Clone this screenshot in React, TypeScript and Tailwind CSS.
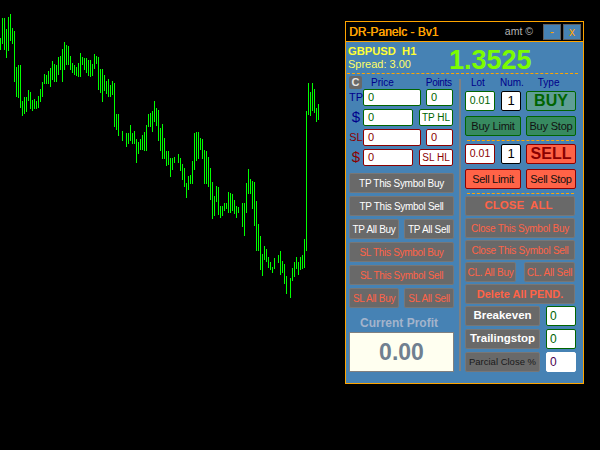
import React from 'react';

// [x, top, bottom] of each bar on the chart
const bars: number[][] = [
  [0, 38, 50], [2, 18, 44], [4, 18, 50], [6, 29, 58], [8, 17, 51], [10, 14, 41], [12, 28, 44], [14, 31, 82],
  [16, 67, 97], [18, 65, 98], [20, 65, 108], [22, 101, 116], [24, 97, 114], [26, 97, 112], [28, 90, 101], [30, 92, 109],
  [32, 100, 111], [34, 99, 109], [36, 101, 109], [38, 96, 108], [40, 89, 102], [42, 82, 97], [44, 74, 84], [46, 75, 84],
  [48, 71, 84], [50, 68, 87], [52, 61, 80], [54, 64, 82], [56, 65, 82], [58, 57, 75], [60, 56, 70], [62, 49, 82],
  [64, 42, 70], [66, 45, 65], [68, 46, 65], [70, 56, 70], [72, 63, 73], [74, 65, 75], [76, 67, 76], [78, 63, 77],
  [80, 53, 77], [82, 57, 65], [84, 58, 70], [86, 58, 73], [88, 60, 76], [90, 60, 77], [92, 64, 76], [94, 54, 69],
  [96, 56, 64], [98, 57, 90], [100, 69, 93], [102, 69, 102], [104, 75, 91], [106, 81, 94], [108, 79, 97], [110, 85, 97],
  [112, 81, 95], [114, 83, 127], [116, 114, 130], [118, 114, 136], [122, 131, 141], [126, 133, 147], [128, 133, 144],
  [130, 125, 141], [132, 133, 144], [134, 131, 144], [136, 139, 163], [138, 142, 154], [140, 139, 150], [142, 135, 150],
  [144, 132, 151], [146, 125, 151], [148, 114, 127], [150, 113, 127], [152, 111, 132], [154, 101, 122], [156, 108, 126],
  [158, 110, 141], [160, 128, 151], [162, 124, 159], [164, 138, 159], [166, 151, 166], [168, 151, 165], [170, 158, 177],
  [172, 158, 170], [174, 157, 163], [178, 154, 163], [180, 158, 171], [182, 164, 180], [184, 168, 187], [186, 183, 198],
  [188, 176, 190], [190, 175, 184], [192, 161, 184], [194, 133, 170], [196, 132, 161], [198, 132, 159], [200, 138, 150],
  [202, 139, 159], [204, 150, 184], [206, 151, 184], [208, 157, 187], [210, 168, 200], [212, 182, 219], [214, 196, 216],
  [216, 186, 202], [218, 187, 215], [220, 206, 218], [222, 206, 216], [224, 203, 211], [226, 203, 209], [228, 192, 213],
  [230, 193, 213], [232, 194, 211], [234, 200, 214], [236, 206, 218], [238, 207, 213], [242, 203, 227], [244, 203, 236],
  [246, 183, 213], [248, 169, 194], [250, 179, 194], [252, 181, 209], [254, 182, 226], [256, 201, 251], [258, 224, 251],
  [260, 236, 270], [262, 254, 276], [264, 246, 260], [266, 249, 262], [268, 257, 268], [270, 262, 270], [272, 267, 273],
  [274, 258, 269], [278, 255, 263], [280, 251, 275], [282, 261, 273], [284, 264, 284], [286, 276, 294], [290, 278, 298],
  [292, 268, 281], [294, 262, 277], [296, 257, 269], [298, 262, 275], [300, 257, 270], [302, 255, 269], [304, 239, 268],
  [306, 111, 251], [308, 83, 115], [310, 92, 116], [312, 83, 111], [314, 89, 113], [316, 108, 122], [318, 104, 120],
];

function Chart() {
  const d = bars.map(([x, a, b]) => `M${x + 0.5} ${a}V${b}`).join('');
  return (
    <svg width="345" height="450" className="shrink-0 block" shapeRendering="crispEdges">
      <path d={d} stroke="#00ff00" strokeWidth="1" fill="none" />
    </svg>
  );
}

function Btn({ className = '', children }: { className?: string; children: React.ReactNode }) {
  return (
    <div
      className={`h-5 flex items-center justify-center whitespace-nowrap rounded-[2px] border border-[#777777] bg-[#696969] ${className}`}
    >
      {children}
    </div>
  );
}

function Field({ className = '', children }: { className?: string; children: React.ReactNode }) {
  return (
    <div className={`flex items-center bg-white rounded-[2px] border whitespace-nowrap ${className}`}>{children}</div>
  );
}

function PriceRow({ label, labelCls, cls, color, wide, second }: {
  label: string; labelCls: string; cls: string; color: string; wide: boolean; second: string;
}) {
  return (
    <div className="flex items-center h-[17px]">
      <div className={`w-[14px] text-center ${labelCls}`}>{label}</div>
      <Field className={`h-[17px] pl-[4px] text-[11px] ${cls} ${color} ${wide ? 'w-[58px]' : 'w-[50px]'}`}>0</Field>
      {wide ? (
        <Field className={`h-[17px] w-[27px] ml-[5px] pl-[4px] text-[11px] ${cls} ${color}`}>{second}</Field>
      ) : (
        <Field className={`h-[17px] w-[34px] ml-[6px] justify-center text-[10px] ${cls} ${color}`}>{second}</Field>
      )}
    </div>
  );
}

function Dash({ className = '' }: { className?: string }) {
  return <div className={`border-t border-dashed border-[#ffa500] ${className}`} />;
}

export default function App() {
  return (
    <div
      className="w-[600px] h-[450px] bg-black flex items-start overflow-hidden"
      style={{ fontFamily: '"Liberation Sans", Arial, sans-serif' }}
    >
      <Chart />
      <div className="mt-[21px] w-[239px] h-[363px] shrink-0 border border-[#ffa500] bg-[#4682b4] flex flex-col">
        {/* title bar */}
        <div className="h-5 shrink-0 bg-black border-b border-[#ffa500] flex items-center pl-[3px] pr-[2px]">
          <span className="text-[12px] leading-none text-[#ffa500] [text-shadow:0.4px_0_0_#ffa500]">DR-Panelc - Bv1</span>
          <span className="ml-auto mr-[10px] text-[10.5px] leading-none text-[#b4b4b4]">amt ©</span>
          <div className="w-[18px] h-[16px] flex items-center justify-center bg-[#4682b4] border border-[#5f5f5f] text-[12px] leading-none text-[#ffa500]">
            -
          </div>
          <div className="w-[18px] h-[16px] ml-[2px] flex items-center justify-center bg-[#4682b4] border border-[#5f5f5f] text-[12px] leading-none text-[#ffa500]">
            x
          </div>
        </div>

        {/* symbol and price */}
        <div className="h-[31px] shrink-0 flex pl-[2px]">
          <div className="flex flex-col pt-[3px] w-[68px]">
            <span className="text-[11.2px] leading-[13px] font-bold whitespace-pre text-[#ffff33]">GBPUSD  H1</span>
            <span className="text-[11px] leading-[13px] text-[#ffff66] whitespace-nowrap">Spread: 3.00</span>
          </div>
          <span className="ml-[33px] mt-[3px] text-[27px] leading-[30px] font-bold text-[#7cfc00]">1.3525</span>
        </div>
        <Dash className="mx-[1px] w-[231px]" />

        {/* body */}
        <div className="flex flex-1 pl-[3px]">
          <div className="w-[105px] shrink-0 flex flex-col">
            <div className="flex items-center h-[13px] mt-[2px] text-[10px] text-[#00008b]">
              <div className="w-[13px] h-[13px] rounded-[2px] bg-[#696969] flex items-center justify-center text-[11px] font-bold text-[#e6e6e6]">
                C
              </div>
              <span className="ml-[9px]">Price</span>
              <span className="ml-[32px] tracking-[-0.3px]">Points</span>
            </div>
            <div className="flex flex-col gap-[3px]">
              <PriceRow label="TP" labelCls="text-[11px] text-[#00008b]" cls="border-[#006400]" color="text-[#006400]" wide second="0" />
              <PriceRow label="$" labelCls="text-[15px] text-[#00008b]" cls="border-[#006400]" color="text-[#006400]" wide={false} second="TP HL" />
              <PriceRow label="SL" labelCls="text-[11px] text-[#8b0000]" cls="border-[#8b0000]" color="text-[#8b0000]" wide second="0" />
              <PriceRow label="$" labelCls="text-[15px] text-[#8b0000]" cls="border-[#8b0000]" color="text-[#8b0000]" wide={false} second="SL HL" />
            </div>
            <div className="flex flex-col gap-[3px] mt-[7px] text-[10px] tracking-[-0.3px]">
              <Btn className="text-white">TP This Symbol Buy</Btn>
              <Btn className="text-white">TP This Symbol Sell</Btn>
              <div className="flex justify-between text-white">
                <Btn className="w-[50px]">TP All Buy</Btn>
                <Btn className="w-[50px]">TP All Sell</Btn>
              </div>
              <Btn className="text-[#ff6347]">SL This Symbol Buy</Btn>
              <Btn className="text-[#ff6347]">SL This Symbol Sell</Btn>
              <div className="flex justify-between text-[#ff6347]">
                <Btn className="w-[50px]">SL All Buy</Btn>
                <Btn className="w-[50px]">SL All Sell</Btn>
              </div>
            </div>
            <div className="mt-[7px] h-[16px] pr-[5px] flex items-center justify-center text-[12px] font-bold text-[#a3b4cc]">
              Current Profit
            </div>
            <div className="mt-[1px] h-[40px] flex items-center justify-center bg-[#fffff0] border border-[#808080] text-[23px] font-bold text-[#708090]">
              0.00
            </div>
          </div>

          <div className="w-[2px] shrink-0 ml-[5px] mt-[5px] h-[292px] bg-[#808080]" />

          <div className="w-[111px] shrink-0 ml-[4px] flex flex-col">
            <div className="flex h-[13px] mt-[2px] items-center text-[10px] text-[#00008b]">
              <span className="ml-[6px]">Lot</span>
              <span className="ml-[15px]">Num.</span>
              <span className="ml-[14px]">Type</span>
            </div>
            <div className="flex mt-[2px] h-5">
              <Field className="h-5 w-[30px] justify-center text-[10.5px] border-[#006400] text-[#006400]">0.01</Field>
              <Field className="h-5 w-5 ml-[6px] justify-center text-[13px] border-black text-black">1</Field>
              <div className="w-[50px] h-5 ml-[5px] flex items-center justify-center rounded-[2px] border border-[#006400] bg-[#5f9e96] text-[16px] font-bold text-[#006400]">
                BUY
              </div>
            </div>
            <div className="flex justify-between mt-[5px] text-[11px] tracking-[-0.2px] text-[#111111]">
              <div className="w-[56px] h-5 flex items-center justify-center whitespace-nowrap rounded-[2px] border border-[#006400] bg-[#378a60]">Buy Limit</div>
              <div className="w-[50px] h-5 flex items-center justify-center whitespace-nowrap rounded-[2px] border border-[#006400] bg-[#378a60]">Buy Stop</div>
            </div>
            <Dash className="mt-[4px] mx-[2px]" />
            <div className="flex mt-[3px] h-5">
              <Field className="h-5 w-[30px] justify-center text-[10.5px] border-[#8b0000] text-[#8b0000]">0.01</Field>
              <Field className="h-5 w-5 ml-[6px] justify-center text-[13px] border-black text-black">1</Field>
              <div className="w-[50px] h-5 ml-[5px] flex items-center justify-center rounded-[2px] border border-[#8b0000] bg-[#ff6347] text-[16px] font-bold text-[#8b0000]">
                SELL
              </div>
            </div>
            <div className="flex justify-between mt-[5px] text-[11px] tracking-[-0.3px] text-[#111111]">
              <div className="w-[56px] h-5 flex items-center justify-center whitespace-nowrap rounded-[2px] border border-[#8b0000] bg-[#ff6347]">Sell Limit</div>
              <div className="w-[50px] h-5 flex items-center justify-center whitespace-nowrap rounded-[2px] border border-[#8b0000] bg-[#ff6347]">Sell Stop</div>
            </div>
            <Dash className="mt-[4px] mx-[2px]" />
            <div className="w-[110px] flex flex-col gap-[2px] mt-[2px] text-[#ff6347]">
              <Btn className="text-[11.5px] font-bold whitespace-pre pr-[3px]">CLOSE  ALL</Btn>
              <Btn className="text-[10px] tracking-[-0.25px]">Close This Symbol Buy</Btn>
              <Btn className="text-[10px] tracking-[-0.25px]">Close This Symbol Sell</Btn>
              <div className="flex justify-between text-[10px] tracking-[-0.25px]">
                <Btn className="w-[51px]">CL. All Buy</Btn>
                <Btn className="w-[51px]">CL. All Sell</Btn>
              </div>
              <Btn className="text-[11px] font-bold">Delete All PEND.</Btn>
            </div>
            <div className="flex flex-col gap-[3px] mt-[2px]">
              <div className="flex justify-between w-[111px]">
                <Btn className="w-[75px] text-[11.5px] font-bold text-white">Breakeven</Btn>
                <Field className="h-5 w-[30px] pl-[3px] text-[12px] border-[#006400] text-[#006400]">0</Field>
              </div>
              <div className="flex justify-between w-[111px]">
                <Btn className="w-[75px] text-[11.5px] font-bold text-white">Trailingstop</Btn>
                <Field className="h-5 w-[30px] pl-[3px] text-[12px] border-[#006400] text-[#006400]">0</Field>
              </div>
              <div className="flex justify-between w-[111px]">
                <Btn className="w-[75px] text-[9.5px] text-[#1a1a1a]">Parcial Close %</Btn>
                <Field className="h-5 w-[30px] pl-[3px] text-[12px] border-white text-[#4b0050]">0</Field>
              </div>
            </div>
          </div>
        </div>
      </div>
    </div>
  );
}
